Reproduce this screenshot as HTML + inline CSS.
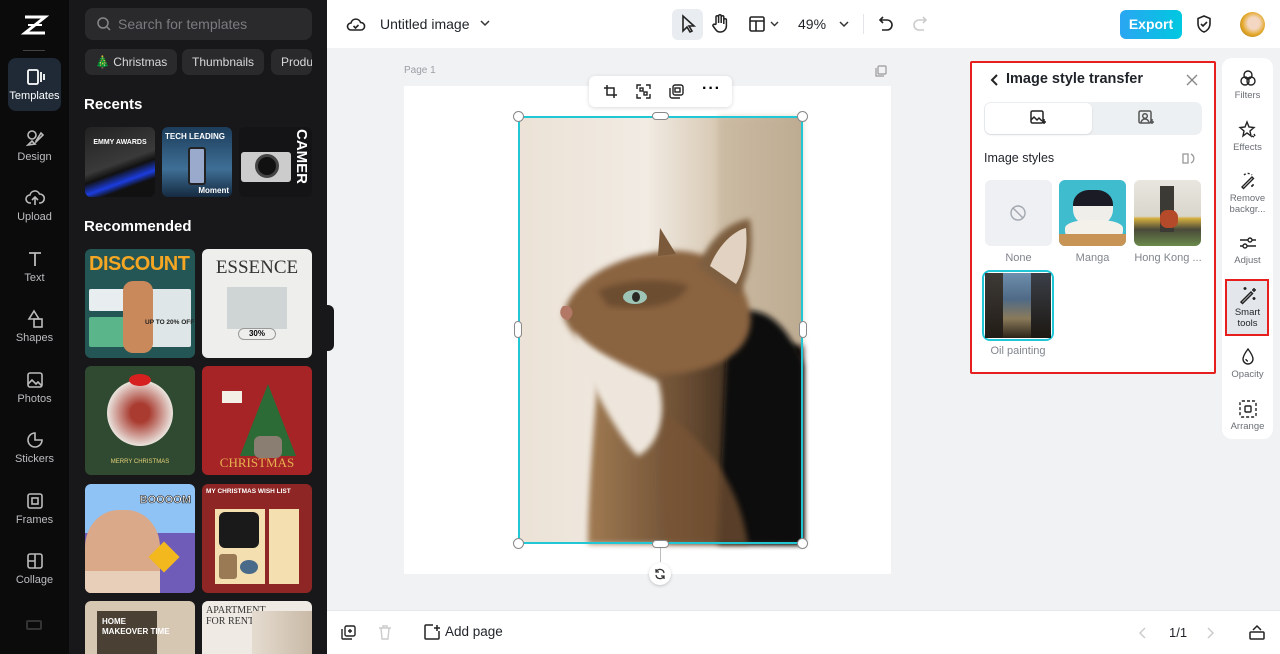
<!DOCTYPE html>
<html><head><meta charset="utf-8"><style>
*{box-sizing:border-box;margin:0;padding:0}
body{width:1280px;height:654px;overflow:hidden;font-family:"Liberation Sans",sans-serif;background:#f1f2f4;position:relative}
.abs{position:absolute}
.rail{left:0;top:0;width:69px;height:654px;background:#0b0b0c}
.ri{position:absolute;left:0;width:69px;text-align:center;color:#bdbdc0;font-size:11px}
.ri svg{display:block;margin:0 auto 3px}
.panel{left:69px;top:0;width:258px;height:654px;background:#18181a}
.chip{position:absolute;top:49px;height:26px;border-radius:7px;background:#2a2a2d;color:#d8d8da;font-size:12px;line-height:26px;padding:0 10px}
.h{position:absolute;left:84px;color:#fff;font-weight:bold;font-size:15px}
.card{position:absolute;border-radius:6px;overflow:hidden}
.top{left:327px;top:0;width:953px;height:48px;background:#fff}
.bot{left:327px;top:610px;width:953px;height:44px;background:#fff;border-top:1px solid #e6e7ea}
svg{overflow:visible}
.tl{position:absolute;left:1222px;width:51px;text-align:center;font-size:9.5px;color:#6b6f76;line-height:11px}
.tl svg{display:block;margin:0 auto 3px}
.handle{position:absolute;width:11px;height:11px;border-radius:50%;background:#fff;border:1px solid #888}
</style></head><body>

<div class="abs rail">
 <svg class="abs" style="left:23px;top:14px" width="24" height="22" viewBox="0 0 24 22"><path d="M2 3h20L2 19h20" fill="none" stroke="#fff" stroke-width="3"/><path d="M5 11h14" stroke="#fff" stroke-width="2"/></svg>
 <div class="abs" style="left:23px;top:50px;width:22px;height:1px;background:#444"></div>
 <div class="abs" style="left:8px;top:58px;width:53px;height:53px;border-radius:8px;background:#1f2a36"></div>
 <div class="ri" style="top:67px;color:#fff"><svg width="20" height="20" viewBox="0 0 20 20" fill="none" stroke="#fff" stroke-width="1.8"><rect x="3" y="3" width="10" height="14" rx="1.5"/><path d="M16 5v10M19 7v6"/></svg>Templates</div>
 <div class="ri" style="top:128px"><svg width="20" height="20" viewBox="0 0 20 20" fill="none" stroke="#bbb" stroke-width="1.6"><circle cx="7" cy="7" r="4"/><path d="M11 13l5-8 2 2-7 7zM3 17l4-4 3 3z"/></svg>Design</div>
 <div class="ri" style="top:188px"><svg width="20" height="20" viewBox="0 0 20 20" fill="none" stroke="#bbb" stroke-width="1.6"><path d="M6 15H5a4 4 0 010-8 5 5 0 019.5-1A4 4 0 0115 15h-1M10 17V9M7 12l3-3 3 3"/></svg>Upload</div>
 <div class="ri" style="top:249px"><svg width="20" height="20" viewBox="0 0 20 20" fill="none" stroke="#bbb" stroke-width="1.8"><path d="M4 4h12M10 4v13"/></svg>Text</div>
 <div class="ri" style="top:309px"><svg width="20" height="20" viewBox="0 0 20 20" fill="none" stroke="#bbb" stroke-width="1.6"><path d="M9 2l5 8H4z"/><rect x="9" y="10" width="8" height="8"/></svg>Shapes</div>
 <div class="ri" style="top:370px"><svg width="20" height="20" viewBox="0 0 20 20" fill="none" stroke="#bbb" stroke-width="1.6"><rect x="3" y="3" width="14" height="14" rx="2"/><path d="M3 14l4-4 4 4 2-2 4 4"/></svg>Photos</div>
 <div class="ri" style="top:430px"><svg width="20" height="20" viewBox="0 0 20 20" fill="none" stroke="#bbb" stroke-width="1.6"><path d="M10 3a7 7 0 107 7h-7z"/></svg>Stickers</div>
 <div class="ri" style="top:491px"><svg width="20" height="20" viewBox="0 0 20 20" fill="none" stroke="#bbb" stroke-width="1.6"><rect x="3" y="3" width="14" height="14" rx="2"/><rect x="7" y="7" width="6" height="6"/></svg>Frames</div>
 <div class="ri" style="top:551px"><svg width="20" height="20" viewBox="0 0 20 20" fill="none" stroke="#bbb" stroke-width="1.6"><rect x="3" y="3" width="14" height="14" rx="2"/><path d="M10 3v14M3 10h7"/></svg>Collage</div>
 <div class="abs" style="left:26px;top:620px;width:16px;height:10px;border:2px solid #333;border-radius:2px"></div>
</div>

<div class="abs panel">
 <div class="abs" style="left:16px;top:8px;width:227px;height:32px;border-radius:8px;background:#2a2a2d"></div>
 <svg class="abs" style="left:28px;top:17px" width="14" height="14" viewBox="0 0 14 14" fill="none" stroke="#888" stroke-width="1.5"><circle cx="6" cy="6" r="5"/><path d="M10 10l3 3"/></svg>
 <div class="abs" style="left:49px;top:16px;color:#7c7c80;font-size:14px">Search for templates</div>
</div>
<div class="chip" style="left:85px">🎄 Christmas</div>
<div class="chip" style="left:182px">Thumbnails</div>
<div class="chip" style="left:271px;width:41px;overflow:hidden">Produ</div>
<div class="h" style="top:96px">Recents</div>
<div class="card" style="left:85px;top:127px;width:70px;height:70px;background:linear-gradient(160deg,#222 0,#3a3a3a 50%,#111 60%,#1b3ddf 72%,#111 80%)"><div style="color:#fff;font-size:7px;font-weight:bold;text-align:center;margin-top:12px">EMMY AWARDS</div></div>
<div class="card" style="left:162px;top:127px;width:70px;height:70px;background:linear-gradient(#1c3c5a,#3f6f96 60%,#152a40)"><div style="color:#fff;font-size:8px;font-weight:bold;margin:5px 0 0 3px">TECH LEADING</div><div style="position:absolute;left:26px;top:20px;width:18px;height:38px;background:#9ac;border-radius:3px;border:2px solid #222"></div><div style="position:absolute;right:3px;bottom:2px;color:#fff;font-size:8px;font-weight:bold">Moment</div></div>
<div class="card" style="left:239px;top:127px;width:73px;height:70px;background:#141416"><div style="position:absolute;left:2px;top:25px;width:50px;height:30px;background:#ccc;border-radius:3px"></div><div style="position:absolute;left:16px;top:27px;width:24px;height:24px;background:#111;border-radius:50%;border:3px solid #444"></div><div style="position:absolute;right:2px;top:2px;color:#fff;font-size:15px;font-weight:bold;writing-mode:vertical-rl">CAMER</div></div>
<div class="h" style="top:218px">Recommended</div>
<div class="card" style="left:85px;top:249px;width:110px;height:109px;background:#235655"><div style="color:#f5a623;font-weight:bold;font-size:20px;margin:4px 0 0 4px;letter-spacing:-.5px">DISCOUNT</div><div style="position:absolute;left:4px;top:40px;width:60px;height:22px;background:#e8eef0;border-radius:2px"></div><div style="position:absolute;left:4px;top:68px;width:36px;height:30px;background:#5ab58a;border-radius:2px"></div><div style="position:absolute;left:62px;top:40px;width:44px;height:58px;background:#dfe6e7;border-radius:2px"></div><div style="position:absolute;left:38px;top:32px;width:30px;height:72px;background:#c9895a;border-radius:10px"></div><div style="position:absolute;left:60px;top:70px;font-size:6.5px;font-weight:bold;color:#222">UP TO 20% OFF</div></div>
<div class="card" style="left:202px;top:249px;width:110px;height:109px;background:#eeeeec"><div style="text-align:center;font-family:'Liberation Serif',serif;font-size:19px;color:#333;margin-top:8px">ESSENCE</div><div style="position:absolute;left:25px;top:38px;width:60px;height:42px;background:#cfd5d4"></div><div style="position:absolute;left:36px;top:79px;width:38px;height:12px;border:1px solid #999;border-radius:6px;font-size:8px;font-weight:bold;text-align:center">30%</div></div>
<div class="card" style="left:85px;top:366px;width:110px;height:109px;background:#2f4a30"><div style="position:absolute;left:22px;top:14px;width:66px;height:66px;border-radius:50%;background:radial-gradient(#a93b30 20%,#e9e2dc 70%)"></div><div style="position:absolute;left:44px;top:8px;width:22px;height:12px;background:#d62020;border-radius:50%"></div><div style="position:absolute;bottom:10px;width:100%;text-align:center;color:#e8d27a;font-size:6px">MERRY CHRISTMAS</div></div>
<div class="card" style="left:202px;top:366px;width:110px;height:109px;background:#a62426"><div style="position:absolute;left:38px;top:18px;width:0;height:0;border-left:28px solid transparent;border-right:28px solid transparent;border-bottom:72px solid #2c6b35"></div><div style="position:absolute;left:20px;top:25px;width:20px;height:12px;background:#f4efe6"></div><div style="position:absolute;left:52px;top:70px;width:28px;height:22px;background:#8a7d72;border-radius:6px"></div><div style="position:absolute;bottom:4px;width:100%;text-align:center;color:#e7b04f;font-size:13px;font-family:'Liberation Serif',serif">CHRISTMAS</div></div>
<div class="card" style="left:85px;top:484px;width:110px;height:109px;background:linear-gradient(#8fc2f5 0,#8fc2f5 45%,#6f5cb8 45%,#6f5cb8)"><div style="position:absolute;left:0;top:26px;width:75px;height:83px;border-radius:45% 45% 0 0;background:#d9a989"></div><div style="position:absolute;left:0;bottom:0;width:75px;height:22px;background:#e8cfb9"></div><div style="position:absolute;right:4px;top:10px;color:#fff;font-size:11px;font-weight:bold;-webkit-text-stroke:.6px #222">BOOOOM</div><div style="position:absolute;left:68px;top:62px;width:22px;height:22px;background:#f2b81d;transform:rotate(45deg)"></div></div>
<div class="card" style="left:202px;top:484px;width:110px;height:109px;background:#8e2625"><div style="position:absolute;left:4px;top:4px;color:#fff;font-size:6.5px;font-weight:bold">MY CHRISTMAS WISH LIST</div><div style="position:absolute;left:13px;top:25px;width:50px;height:75px;background:#f4dfb0"></div><div style="position:absolute;left:67px;top:25px;width:30px;height:75px;background:#f4dfb0"></div><div style="position:absolute;left:17px;top:28px;width:40px;height:36px;background:#1a1a1a;border-radius:6px"></div><div style="position:absolute;left:17px;top:70px;width:18px;height:25px;background:#9a7a55;border-radius:3px"></div><div style="position:absolute;left:38px;top:76px;width:18px;height:14px;background:#4a6a8a;border-radius:50%"></div></div>
<div class="card" style="left:85px;top:601px;width:110px;height:53px;border-radius:6px 6px 0 0;background:#d6c7b3"><div style="position:absolute;left:12px;top:10px;width:60px;height:43px;background:#4a4033"></div><div style="position:absolute;left:17px;top:16px;color:#fff;font-size:8px;font-weight:bold;line-height:10px">HOME<br>MAKEOVER TIME</div></div>
<div class="card" style="left:202px;top:601px;width:110px;height:53px;border-radius:6px 6px 0 0;background:#efeae3"><div style="font-family:'Liberation Serif',serif;font-size:10px;margin:4px;color:#333">APARTMENT<br>FOR RENT</div><div style="position:absolute;right:0;top:10px;width:60px;height:43px;background:linear-gradient(90deg,#e5dcd0,#c9b9a6)"></div></div>
<div class="abs" style="left:326px;top:305px;width:8px;height:46px;background:#18181a;border-radius:0 6px 6px 0"></div>

<div class="abs top">
 <svg class="abs" style="left:20px;top:16px" width="18" height="16" viewBox="0 0 18 16" fill="none" stroke="#222" stroke-width="1.6"><path d="M4 14a3.5 3.5 0 010-7 5 5 0 019.6-.5A3.5 3.5 0 0114 14z"/><path d="M6.5 10l2 2 3-3"/></svg>
 <div class="abs" style="left:53px;top:16px;font-size:14px;color:#1f2329">Untitled image</div>
 <svg class="abs" style="left:153px;top:20px" width="10" height="7"><path d="M1 1l4 4 4-4" fill="none" stroke="#333" stroke-width="1.5"/></svg>
 <div class="abs" style="left:345px;top:9px;width:31px;height:31px;border-radius:6px;background:#e9ecf0"></div>
 <svg class="abs" style="left:354px;top:15px" width="14" height="18" viewBox="0 0 14 18" fill="none" stroke="#222" stroke-width="1.6"><path d="M2 1v15l4-4 3 5 2-1-3-5h5z"/></svg>
 <svg class="abs" style="left:385px;top:14px" width="16" height="19" viewBox="0 0 16 19" fill="none" stroke="#222" stroke-width="1.5"><path d="M4 10V3a1.3 1.3 0 012.6 0v6V2a1.3 1.3 0 012.6 0v7V3a1.3 1.3 0 012.6 0v7V6a1.3 1.3 0 012.6 0v6a6 6 0 01-6 6H8a5 5 0 01-4-2l-3-4a1.3 1.3 0 012-1.5z"/></svg>
 <svg class="abs" style="left:422px;top:16px" width="16" height="16" viewBox="0 0 16 16" fill="none" stroke="#222" stroke-width="1.6"><rect x="1" y="1" width="14" height="14" rx="1.5"/><path d="M1 5h14M7 5v10"/></svg>
 <svg class="abs" style="left:443px;top:21px" width="9" height="6"><path d="M1 1l3.5 3.5L8 1" fill="none" stroke="#333" stroke-width="1.4"/></svg>
 <div class="abs" style="left:471px;top:16px;font-size:14px;color:#1f2329">49%</div>
 <svg class="abs" style="left:512px;top:21px" width="10" height="7"><path d="M1 1l4 4 4-4" fill="none" stroke="#333" stroke-width="1.5"/></svg>
 <div class="abs" style="left:536px;top:14px;width:1px;height:20px;background:#e3e5e8"></div>
 <svg class="abs" style="left:552px;top:16px" width="14" height="16" viewBox="0 0 14 16" fill="none" stroke="#222" stroke-width="1.6"><path d="M4 1L1 4l3 3M1 4h7a5 5 0 010 10H3"/></svg>
 <svg class="abs" style="left:586px;top:16px" width="14" height="16" viewBox="0 0 14 16" fill="none" stroke="#ccc" stroke-width="1.6"><path d="M10 1l3 3-3 3M13 4H6a5 5 0 000 10h5"/></svg>
 <div class="abs" style="left:793px;top:10px;width:62px;height:29px;border-radius:6px;background:linear-gradient(90deg,#2aa6f2,#00c8e0);color:#fff;font-weight:bold;font-size:14px;text-align:center;line-height:29px">Export</div>
 <svg class="abs" style="left:869px;top:15px" width="16" height="18" viewBox="0 0 16 18" fill="none" stroke="#222" stroke-width="1.6"><path d="M8 1l6 2.5v5C14 13 11 16 8 17 5 16 2 13 2 8.5v-5z"/><path d="M5 9l2 2 4-4"/></svg>
 <div class="abs" style="left:913px;top:12px;width:25px;height:25px;border-radius:50%;background:radial-gradient(circle at 55% 45%,#f4d7c2 30%,#e2a624 60%,#8a6a30)"></div>
</div>

<div class="abs" style="left:404px;top:65px;font-size:10px;color:#9a9ea5">Page 1</div>
<svg class="abs" style="left:875px;top:65px" width="12" height="12" viewBox="0 0 12 12" fill="none" stroke="#999" stroke-width="1.2"><rect x="3" y="1" width="8" height="8" rx="1"/><path d="M1 3v8h8"/></svg>
<div class="abs" style="left:404px;top:86px;width:487px;height:488px;background:#fff"></div>

<svg class="abs" style="left:518px;top:116px" width="285" height="428" viewBox="0 0 285 428">
 <defs>
  <linearGradient id="bg" x1="0" x2="1"><stop offset="0" stop-color="#ece2d6"/><stop offset=".45" stop-color="#f1ebe3"/><stop offset=".7" stop-color="#d8c9b4"/><stop offset="1" stop-color="#b9a78d"/></linearGradient>
  <linearGradient id="body" x1="0" x2="1"><stop offset="0" stop-color="#a07a52"/><stop offset=".45" stop-color="#6b4e33"/><stop offset=".8" stop-color="#2a2018"/><stop offset="1" stop-color="#120f0c"/></linearGradient>
  <filter id="bl"><feGaussianBlur stdDeviation="3"/></filter>
 </defs>
 <rect width="285" height="428" fill="url(#bg)"/>
 <path d="M200 0h85v428h-85z" fill="#c2b096" opacity=".5" filter="url(#bl)"/>
 <path d="M285 230 L285 428 L70 428 C70 380 75 320 80 260 C120 230 200 220 285 230z" fill="url(#body)" filter="url(#bl)"/>
 <path d="M210 200 C250 180 275 220 285 250 L285 428 L200 428z" fill="#0f0d0b" filter="url(#bl)"/>
 <path d="M45 200 C50 170 90 140 150 135 C190 132 225 155 232 195 C238 235 200 255 150 258 C100 260 60 235 45 200z" fill="#8a6440" filter="url(#bl)"/>
 <path d="M140 140 L142 112 L158 138z" fill="#7a5a3a"/>
 <path d="M180 150 C190 125 210 105 232 103 C236 130 232 160 220 180z" fill="#7d5e40" filter="url(#bl)"/>
 <path d="M192 150 C200 130 215 115 228 112 C230 135 226 155 218 168z" fill="#e2d2c2"/>
 <path d="M55 215 C80 240 110 250 140 265 C150 300 140 330 120 340 C100 320 80 280 60 240z" fill="#eee6dc" filter="url(#bl)"/>
 <path d="M80 175 C100 165 140 160 170 170 C160 190 130 195 90 190z" fill="#5a3f28" opacity=".6" filter="url(#bl)"/>
 <ellipse cx="117" cy="181" rx="12" ry="7" fill="#9ec4b6"/>
 <ellipse cx="118" cy="181" rx="4" ry="5" fill="#2a2a22"/>
 <path d="M45 190 C40 195 42 203 50 204 C56 200 56 193 50 190z" fill="#b37766"/>
 <path d="M150 300 C180 320 220 360 230 428 L150 428 C140 380 140 340 150 300z" fill="#7a5535" opacity=".7" filter="url(#bl)"/>
</svg>
<div class="abs" style="left:518px;top:116px;width:285px;height:428px;border:2px solid #22c7d6"></div>
<div class="handle" style="left:513px;top:111px"></div><div class="handle" style="left:797px;top:111px"></div>
<div class="handle" style="left:513px;top:538px"></div><div class="handle" style="left:797px;top:538px"></div>
<div class="abs" style="left:652px;top:112px;width:17px;height:8px;border-radius:4px;background:#fff;border:1px solid #888"></div>
<div class="abs" style="left:652px;top:540px;width:17px;height:8px;border-radius:4px;background:#fff;border:1px solid #888"></div>
<div class="abs" style="left:514px;top:321px;width:8px;height:17px;border-radius:4px;background:#fff;border:1px solid #888"></div>
<div class="abs" style="left:799px;top:321px;width:8px;height:17px;border-radius:4px;background:#fff;border:1px solid #888"></div>
<div class="abs" style="left:660px;top:548px;width:1px;height:14px;background:#bbb"></div>
<div class="abs" style="left:649px;top:563px;width:22px;height:22px;border-radius:50%;background:#fff;box-shadow:0 1px 3px rgba(0,0,0,.2)"><svg style="position:absolute;left:5px;top:5px" width="12" height="12" viewBox="0 0 12 12" fill="none" stroke="#333" stroke-width="1.3"><path d="M10 5A4 4 0 002.5 3.5M2 7a4 4 0 007.5 1.5M2 1v3h3M10 11V8H7"/></svg></div>
<div class="abs" style="left:589px;top:76px;width:143px;height:31px;border-radius:6px;background:#fff;box-shadow:0 1px 4px rgba(0,0,0,.15)">
 <svg style="position:absolute;left:14px;top:8px" width="15" height="15" viewBox="0 0 15 15" fill="none" stroke="#222" stroke-width="1.5"><path d="M4 1v10h10M1 4h10v10"/></svg>
 <svg style="position:absolute;left:47px;top:8px" width="15" height="15" viewBox="0 0 15 15" fill="none" stroke="#222" stroke-width="1.4"><path d="M1 5V1h4M10 1h4v4M14 10v4h-4M5 14H1v-4"/><rect x="4" y="4" width="3" height="3"/><rect x="8" y="8" width="3" height="3"/></svg>
 <svg style="position:absolute;left:80px;top:8px" width="15" height="15" viewBox="0 0 15 15" fill="none" stroke="#222" stroke-width="1.4"><rect x="4" y="1" width="10" height="10" rx="2"/><path d="M1 4v8a2 2 0 002 2h8"/><rect x="6" y="4" width="5" height="4"/></svg>
 <div style="position:absolute;left:113px;top:4px;font-size:16px;font-weight:bold;letter-spacing:1px">···</div>
</div>

<div class="abs" style="left:970px;top:61px;width:246px;height:313px;background:#fff;border:2px solid #e61e1e;border-radius:2px"></div>
<svg class="abs" style="left:991px;top:74px" width="8" height="12"><path d="M6 1L1 6l5 5" fill="none" stroke="#222" stroke-width="2"/></svg>
<div class="abs" style="left:1006px;top:71px;font-size:14.5px;font-weight:bold;color:#1f2329">Image style transfer</div>
<svg class="abs" style="left:1186px;top:74px" width="12" height="12"><path d="M1 1l10 10M11 1L1 11" stroke="#888" stroke-width="1.4"/></svg>
<div class="abs" style="left:984px;top:102px;width:218px;height:33px;border-radius:7px;background:#edf0f3"></div>
<div class="abs" style="left:985px;top:103px;width:107px;height:31px;border-radius:6px;background:#fff;box-shadow:0 1px 2px rgba(0,0,0,.1)"></div>
<svg class="abs" style="left:1030px;top:110px" width="17" height="16" viewBox="0 0 17 16" fill="none" stroke="#222" stroke-width="1.5"><rect x="1" y="1" width="12" height="12" rx="1.5"/><path d="M1 10l3-3 3 3 2-2 3 3M14 9v5M12 12h4"/></svg>
<svg class="abs" style="left:1138px;top:110px" width="17" height="16" viewBox="0 0 17 16" fill="none" stroke="#555" stroke-width="1.5"><rect x="1" y="1" width="12" height="12" rx="1.5"/><circle cx="7" cy="6" r="2.3"/><path d="M3 13a4 4 0 018 0M14 9v5M12 12h4"/></svg>
<div class="abs" style="left:984px;top:151px;font-size:12.5px;color:#1f2329">Image styles</div>
<svg class="abs" style="left:1182px;top:152px" width="13" height="13" viewBox="0 0 13 13" fill="none" stroke="#999" stroke-width="1.3"><rect x="1" y="2" width="5" height="9"/><path d="M9 2a5 5 0 010 9"/></svg>
<div class="abs" style="left:985px;top:180px;width:67px;height:66px;border-radius:6px;background:#eef0f3"><svg style="position:absolute;left:25px;top:25px" width="16" height="16" viewBox="0 0 16 16" fill="none" stroke="#a3a8b0" stroke-width="1.4"><circle cx="8" cy="8" r="7"/><path d="M3 3l10 10"/></svg></div>
<div class="abs" style="left:1059px;top:180px;width:67px;height:66px;border-radius:6px;overflow:hidden;background:#3fbccd"><div style="position:absolute;left:14px;top:10px;width:40px;height:36px;border-radius:40% 40% 45% 45%;background:linear-gradient(#1b1b25 45%,#f0eeea 45%)"></div><div style="position:absolute;left:6px;top:40px;width:58px;height:20px;border-radius:40%;background:#f4f0ea"></div><div style="position:absolute;left:0;bottom:0;width:67px;height:12px;background:#c89456"></div></div>
<div class="abs" style="left:1134px;top:180px;width:67px;height:66px;border-radius:6px;overflow:hidden;background:linear-gradient(#e8e6df 0,#d9d6cc 55%,#d6b040 58%,#4a4a3a 75%,#6a8a4a)"><div style="position:absolute;left:26px;top:6px;width:14px;height:46px;background:#3b3a35"></div><div style="position:absolute;left:26px;top:30px;width:18px;height:18px;background:#b44a2a;border-radius:40%"></div></div>
<div class="abs" style="left:985px;top:252px;width:67px;text-align:center;font-size:11px;color:#80858d">None</div>
<div class="abs" style="left:1059px;top:252px;width:67px;text-align:center;font-size:11px;color:#80858d">Manga</div>
<div class="abs" style="left:1132px;top:252px;width:72px;text-align:center;font-size:11px;color:#80858d;white-space:nowrap">Hong Kong ...</div>
<div class="abs" style="left:982px;top:270px;width:72px;height:71px;border-radius:8px;border:2px solid #21c6d6"></div>
<div class="abs" style="left:985px;top:273px;width:66px;height:65px;border-radius:6px;background:linear-gradient(180deg,#6e8fae 0,#4f6a86 40%,#8a7a5a 70%,#2c2418)"><div style="position:absolute;left:0;top:0;width:18px;height:65px;background:linear-gradient(#3d3a36,#221c16)"></div><div style="position:absolute;right:0;top:0;width:20px;height:65px;background:linear-gradient(#3b3f48,#1c1812)"></div></div>
<div class="abs" style="left:982px;top:345px;width:72px;text-align:center;font-size:11px;color:#80858d">Oil painting</div>

<div class="abs" style="left:1222px;top:58px;width:51px;height:381px;background:#fff;border-radius:10px"></div>
<div class="tl" style="top:69px"><svg width="18" height="18" viewBox="0 0 18 18" fill="none" stroke="#222" stroke-width="1.4"><circle cx="9" cy="6" r="4"/><circle cx="6" cy="12" r="4"/><circle cx="12" cy="12" r="4"/></svg>Filters</div>
<div class="tl" style="top:121px"><svg width="18" height="18" viewBox="0 0 18 18" fill="none" stroke="#222" stroke-width="1.4"><path d="M8 1l2 5 5 .5-4 3.5 1 5-4-3-4 3 1-5-4-3.5 5-.5zM15 13l1 2M13 15l2 1"/></svg>Effects</div>
<div class="tl" style="top:172px"><svg width="18" height="18" viewBox="0 0 18 18" fill="none" stroke="#222" stroke-width="1.4"><path d="M3 15L13 5l1.5 1.5-10 10z" /><path d="M5 3a6 6 0 018 0M14 12v4M12 14h4" stroke-dasharray="2 2"/></svg>Remove<br>backgr...</div>
<div class="tl" style="top:234px"><svg width="18" height="18" viewBox="0 0 18 18" fill="none" stroke="#222" stroke-width="1.4"><path d="M1 6h16M1 12h16"/><circle cx="11" cy="6" r="2" fill="#fff"/><circle cx="6" cy="12" r="2" fill="#fff"/></svg>Adjust</div>
<div class="abs" style="left:1225px;top:279px;width:44px;height:57px;background:#e3e6ea;border:2px solid #e61e1e"></div>
<div class="tl" style="top:286px;color:#1f2329"><svg width="18" height="18" viewBox="0 0 18 18" fill="none" stroke="#222" stroke-width="1.5"><path d="M2 16L12 6l1.5 1.5-10 10zM6 1v3M4.5 2.5h3M15 2v4M13 4h4M15 11v3M13.5 12.5h3"/></svg>Smart<br>tools</div>
<div class="tl" style="top:348px"><svg width="18" height="18" viewBox="0 0 18 18" fill="none" stroke="#222" stroke-width="1.4"><path d="M9 1c3 4 5 7 5 10a5 5 0 01-10 0c0-3 2-6 5-10z"/><path d="M7 11a2 2 0 002 2"/></svg>Opacity</div>
<div class="tl" style="top:400px"><svg width="18" height="18" viewBox="0 0 18 18" fill="none" stroke="#222" stroke-width="1.4"><rect x="1" y="1" width="16" height="16" rx="2" stroke-dasharray="3 2"/><rect x="6" y="6" width="6" height="6" rx="1"/></svg>Arrange</div>

<div class="abs bot">
 <svg class="abs" style="left:14px;top:14px" width="15" height="15" viewBox="0 0 15 15" fill="none" stroke="#222" stroke-width="1.4"><rect x="4" y="1" width="10" height="10" rx="1.5"/><path d="M1 4v9a1 1 0 001 1h9M9 4v4M7 6h4"/></svg>
 <svg class="abs" style="left:51px;top:14px" width="14" height="15" viewBox="0 0 14 15" fill="none" stroke="#ccc" stroke-width="1.4"><path d="M1 3h12M5 3V1h4v2M3 3l1 11h6l1-11"/></svg>
 <svg class="abs" style="left:97px;top:13px" width="16" height="16" viewBox="0 0 16 16" fill="none" stroke="#222" stroke-width="1.5"><path d="M9 1H2a1 1 0 00-1 1v12a1 1 0 001 1h12a1 1 0 001-1V7M13 1v6M10 4h6"/></svg>
 <div class="abs" style="left:118px;top:13px;font-size:13.5px;color:#1f2329">Add page</div>
 <svg class="abs" style="left:812px;top:16px" width="8" height="12"><path d="M6 1L1 6l5 5" fill="none" stroke="#ccc" stroke-width="1.5"/></svg>
 <div class="abs" style="left:842px;top:14px;font-size:13px;color:#1f2329">1/1</div>
 <svg class="abs" style="left:880px;top:16px" width="8" height="12"><path d="M1 1l5 5-5 5" fill="none" stroke="#ccc" stroke-width="1.5"/></svg>
 <svg class="abs" style="left:922px;top:13px" width="16" height="16" viewBox="0 0 16 16" fill="none" stroke="#222" stroke-width="1.5"><rect x="1" y="8" width="14" height="7" rx="1"/><path d="M4 6l4-4 4 4"/></svg>
</div>
</body></html>
